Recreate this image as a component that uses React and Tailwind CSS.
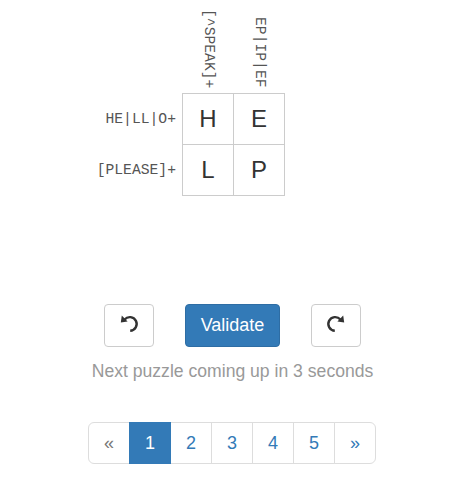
import React from "react";

function UndoIcon({ flip }) {
  return (
    <svg width="24" height="24" viewBox="0 0 24 24" className={flip ? "-scale-x-100" : ""}>
      <path d="M7.6 7.6 A6.8 6.8 0 1 1 13.2 18.7" fill="none" stroke="#333" strokeWidth="2.4" />
      <polygon points="4.8,3.6 10.6,9.4 3.8,10.6" fill="#333" />
    </svg>
  );
}

export default function App() {
  const mono = { fontFamily: '"Liberation Mono", "DejaVu Sans Mono", monospace' };
  const cols = ["[^SPEAK]+", "EP|IP|EF"];
  const rows = [
    { label: "HE|LL|O+", cells: ["H", "E"] },
    { label: "[PLEASE]+", cells: ["L", "P"] },
  ];
  return (
    <div
      className="w-[463px] h-[490px] bg-white flex flex-col"
      style={{ fontFamily: '"Liberation Sans", Arial, sans-serif' }}
    >
      {/* headers */}
      <div className="flex h-[88px] mb-[5px]">
        <div className="w-[183px]" />
        {cols.map((c) => (
          <div key={c} className="w-[51px] flex justify-center items-end">
            <div
              className="[writing-mode:vertical-rl] text-[14.7px] text-[#555] leading-none"
              style={mono}
            >
              {c}
            </div>
          </div>
        ))}
      </div>
      {/* rows */}
      <div className="flex">
        <div className="w-[182px] flex flex-col pt-[1px]">
          {rows.map((r) => (
            <div
              key={r.label}
              className="h-[51px] flex items-center justify-end pr-[6px] text-[14.7px] text-[#555]"
              style={mono}
            >
              {r.label}
            </div>
          ))}
        </div>
        <div className="border-l border-t border-[#ccc] flex flex-col">
          {rows.map((r) => (
            <div key={r.label} className="flex">
              {r.cells.map((c) => (
                <div
                  key={c}
                  className="w-[51px] h-[51px] border-r border-b border-[#ccc] flex items-center justify-center text-[24px] text-[#333]"
                >
                  {c}
                </div>
              ))}
            </div>
          ))}
        </div>
      </div>
      {/* buttons */}
      <div className="flex justify-center items-center gap-[31px] mt-[108px] pl-[2px]">
        <button className="w-[50px] h-[43px] border border-[#ccc] rounded-[4px] bg-white flex items-center justify-center pb-[4px]">
          <UndoIcon />
        </button>
        <button className="w-[95px] h-[43px] border border-[#2e6da4] rounded-[4px] bg-[#337ab7] text-white text-[18px] flex items-center justify-center">
          Validate
        </button>
        <button className="w-[50px] h-[43px] border border-[#ccc] rounded-[4px] bg-white flex items-center justify-center pb-[4px]">
          <UndoIcon flip />
        </button>
      </div>
      <div className="text-center text-[17.6px] text-[#999] mt-[12px] leading-[24px] pl-[2px]">
        Next puzzle coming up in 3 seconds
      </div>
      {/* pagination */}
      <div className="flex justify-center mt-[39px] pl-[1px]">
        <div className="flex text-[18px]">
          {["«", "1", "2", "3", "4", "5", "»"].map((p, i) => {
            const first = i === 0;
            const last = i === 6;
            const active = p === "1";
            return (
              <div
                key={p}
                className={
                  "h-[42px] w-[42px] flex items-center justify-center border " +
                  (first ? "rounded-l-[6px] " : "-ml-[1px] ") +
                  (last ? "rounded-r-[6px] " : "") +
                  (active
                    ? "bg-[#337ab7] border-[#337ab7] text-white z-10"
                    : first
                    ? "bg-white border-[#ddd] text-[#777]"
                    : "bg-white border-[#ddd] text-[#337ab7]")
                }
              >
                {p}
              </div>
            );
          })}
        </div>
      </div>
    </div>
  );
}
